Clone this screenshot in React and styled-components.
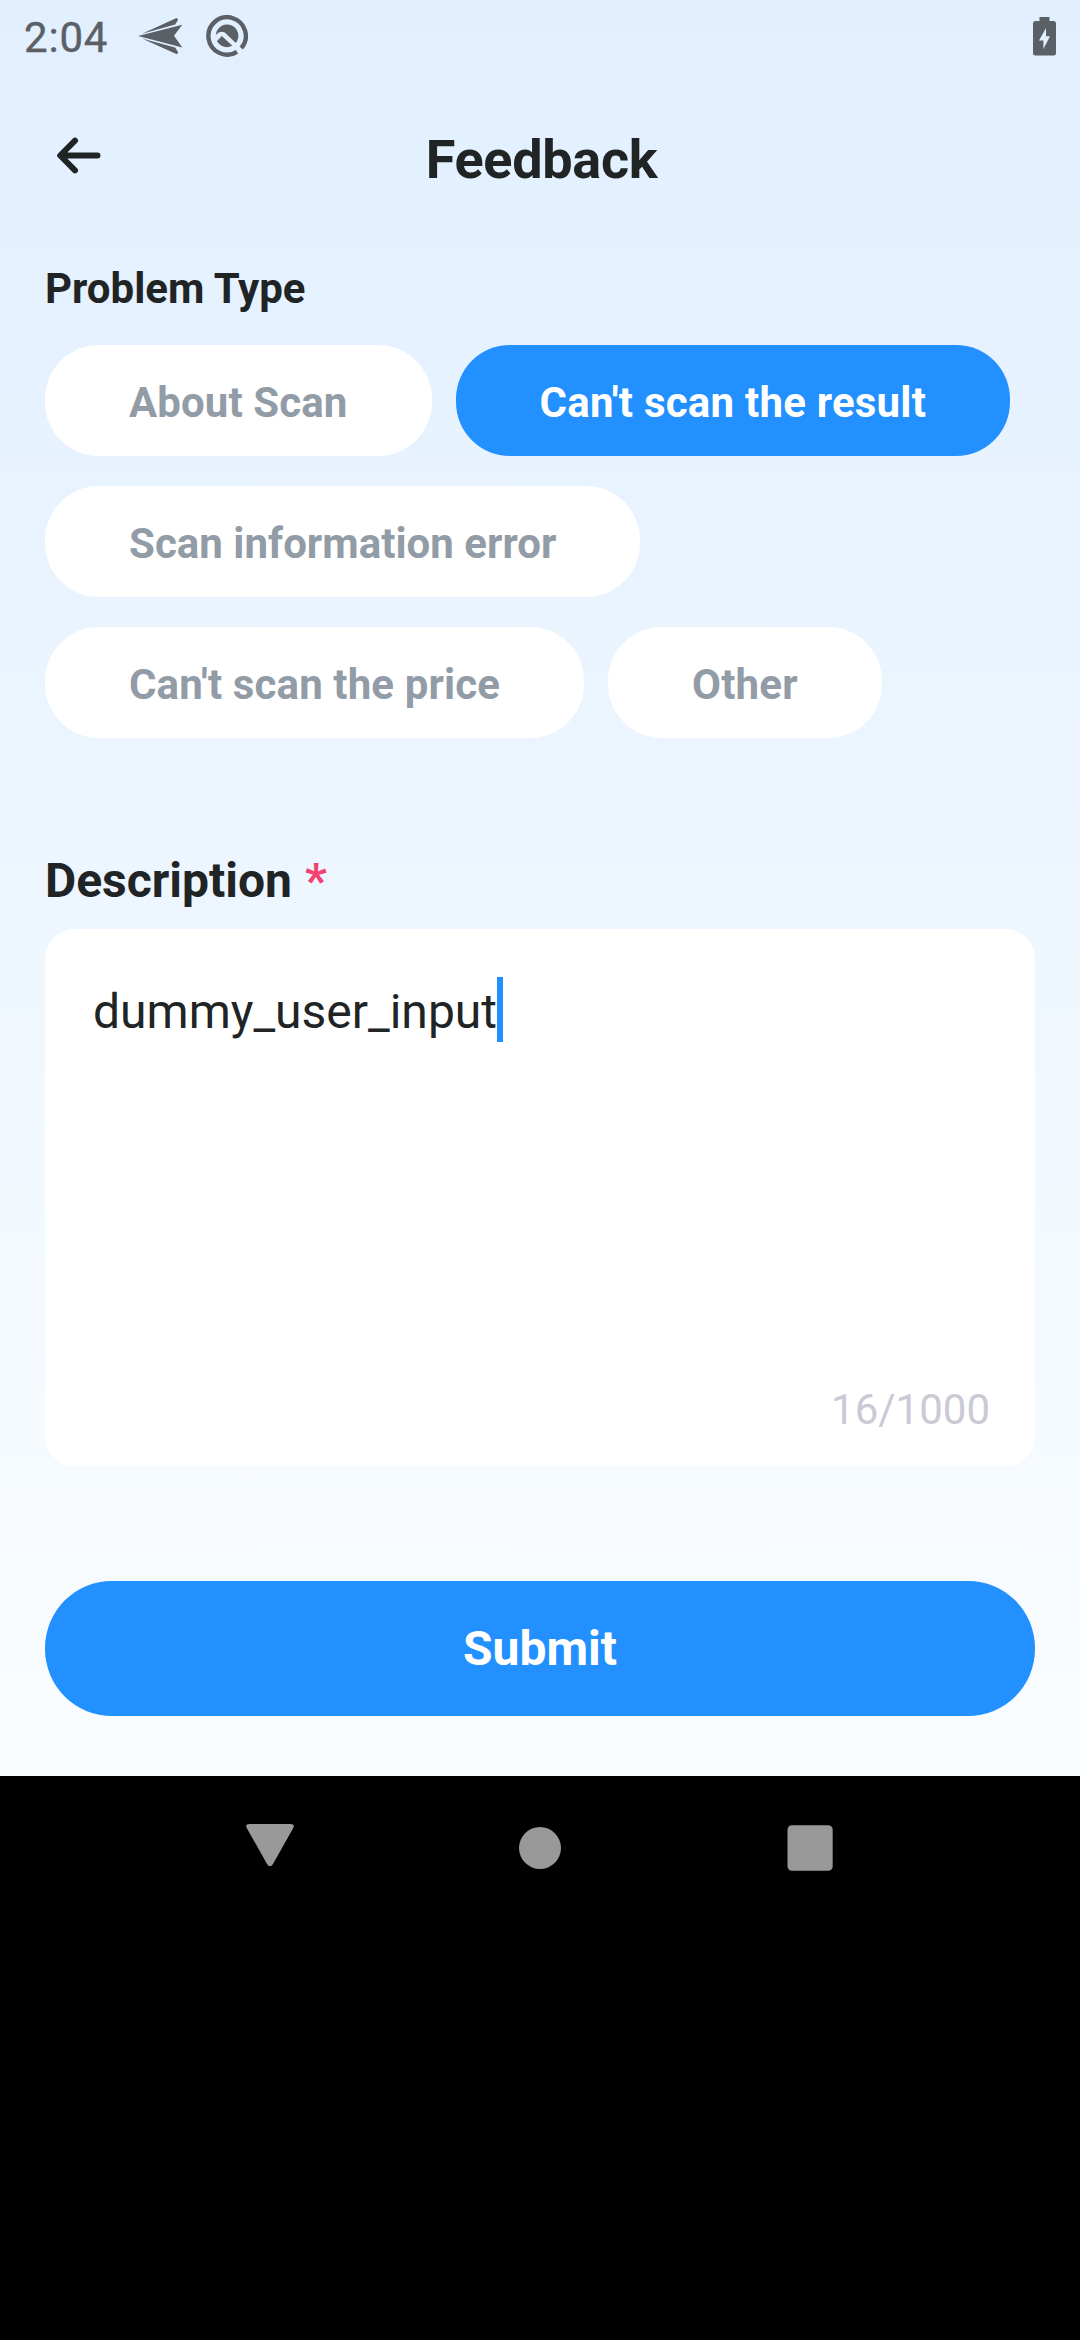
import React, { useState } from "react";
import styled, { createGlobalStyle } from "styled-components";

const GlobalStyle = createGlobalStyle`
  * { box-sizing: border-box; }
  body { margin: 0; background: #000; font-family: Roboto, "Noto Sans", sans-serif; }
  button { font-family: inherit; border: 0; margin: 0; }
`;

const Device = styled.div`
  width: 1080px;
  height: 2340px;
  display: flex;
  flex-direction: column;
  overflow: hidden;
  background: #000;
`;

const Screen = styled.main`
  height: 1776px;
  display: flex;
  flex-direction: column;
  background: linear-gradient(180deg, #e1efff 0%, #fafdff 100%);
  color: #212425;
`;

const StatusBar = styled.div`
  height: 72px;
  padding: 0 24px;
  display: flex;
  align-items: center;
  color: #5b6066;
`;

const Clock = styled.span`
  width: 114px;
  padding-top: 3px;
  font-size: 42px;
  line-height: 50px;
  font-weight: 400;
  letter-spacing: 0.8px;
  -webkit-text-stroke: 0.4px currentColor;
`;

const StatusIcons = styled.div`
  flex: 1;
  display: flex;
  align-items: center;
  gap: 22px;
`;

const Header = styled.header`
  height: 176px;
  padding: 0 45px;
  display: grid;
  grid-template-columns: 66px 1fr 66px;
  align-items: center;
`;

const BackButton = styled.button`
  width: 66px;
  height: 66px;
  padding: 0;
  margin-bottom: 10px;
  background: none;
  color: #212425;
  svg { display: block; }
`;

const Title = styled.h1`
  margin: 0;
  padding-left: 3px;
  font-size: 54px;
  line-height: 64px;
  font-weight: 700;
  letter-spacing: -0.3px;
  text-align: center;
`;

const Form = styled.div`
  padding: 16px 45px 0;
  display: flex;
  flex-direction: column;
`;

const SectionLabel = styled.h2`
  margin: 0;
  font-size: 42px;
  line-height: 50px;
  font-weight: 700;
`;

const ChipList = styled.div`
  margin-top: 31px;
  display: flex;
  flex-wrap: wrap;
  gap: 30px 24px;
`;

const Chip = styled.button`
  height: 111px;
  padding: 4px 84px 0;
  border-radius: 54px;
  font-size: 42px;
  line-height: 50px;
  font-weight: 700;
  letter-spacing: ${(p) => p.$tracking}px;
  white-space: nowrap;
  background: ${(p) => (p.$selected ? "#2290ff" : "#fff")};
  color: ${(p) => (p.$selected ? "#fff" : "#929ca6")};
`;

const FieldLabel = styled.h2`
  margin: 115px 0 20px;
  font-size: 48px;
  line-height: 56px;
  font-weight: 700;
`;

const Required = styled.span`
  margin-left: 1px;
  color: #f0436f;
`;

const DescriptionBox = styled.div`
  height: 537px;
  padding: 48px 45px 31px 48px;
  border-radius: 30px;
  background: #fff;
  display: flex;
  flex-direction: column;
  justify-content: space-between;
`;

const InputLine = styled.div`
  height: 65px;
  display: flex;
  align-items: center;
  font-size: 48px;
  line-height: 65px;
`;

const InputText = styled.span`
  padding-top: 4px;
`;

const Caret = styled.span`
  width: 6px;
  height: 65px;
  background: #2290ff;
`;

const Counter = styled.div`
  align-self: flex-end;
  font-size: 42px;
  line-height: 50px;
  color: #c9cad4;
`;

const SubmitButton = styled.button`
  margin-top: 115px;
  height: 135px;
  padding: 0;
  border-radius: 67px;
  background: #2290ff;
  color: #fff;
  font-size: 48px;
  font-weight: 700;
`;

const NavBar = styled.nav`
  height: 144px;
  padding: 0 135px;
  display: grid;
  grid-template-columns: repeat(3, 1fr);
  justify-items: center;
  align-items: center;
  svg { display: block; }
`;

const PlaneIcon = () => (
  <svg width="46" height="40" viewBox="0 0 46 40" fill="currentColor">
    <path d="M0 20 L44.3 8.8 L36 19.8 L44.3 31.4 Z" />
    <path d="M4 17.8 L38.5 2 L40.2 3.6 L37.2 8.4 Z" />
    <path d="M4 22.4 L37.2 31.5 L40.2 36.6 L38.8 38.2 Z" />
  </svg>
);

const CircleIcon = () => (
  <svg width="42" height="42" viewBox="0 0 42 42" fill="none">
    <path d="M35.3 33.1 A18.7 18.7 0 1 0 31 36.8" stroke="currentColor" strokeWidth="4.4" />
    <path d="M9.8 20 A11.3 11.3 0 1 1 29.8 28 L18.8 17.6 Q14.4 15 9.8 20 Z" fill="currentColor" />
    <path d="M10.8 26.2 L15.8 21 L26.4 30.8 Q17.5 35 10.8 26.2 Z" fill="currentColor" />
  </svg>
);

const BatteryIcon = () => (
  <svg width="23" height="39" viewBox="0 0 23 39">
    <path
      fill="currentColor"
      fillRule="evenodd"
      d="M6.5 0 H16.5 V4 H20.5 Q23 4 23 6.5 V36 Q23 38.5 20.5 38.5 H2.5 Q0 38.5 0 36 V6.5 Q0 4 2.5 4 H6.5 Z M13 11 L6 23.5 H10.4 V32 L17 19.3 H13 Z"
    />
  </svg>
);

const BackIcon = () => (
  <svg width="66" height="66" viewBox="0 0 66 66" fill="none" stroke="currentColor" strokeWidth="6" strokeLinecap="round" strokeLinejoin="round">
    <path d="M52.5 33.5 H15.5 M30 18.7 L15.2 33.5 L30 48.3" />
  </svg>
);

const NavBack = () => (
  <svg width="48" height="48" viewBox="0 0 48 48">
    <path fill="#999" d="M3.5 0 H44.5 Q49.5 0 47 4.4 L27 40 Q24 44.5 21 40 L1 4.4 Q-1.5 0 3.5 0 Z" />
  </svg>
);

const NavHome = () => (
  <svg width="48" height="48" viewBox="0 0 48 48">
    <circle cx="24" cy="24" r="21" fill="#999" />
  </svg>
);

const NavRecent = () => (
  <svg width="48" height="48" viewBox="0 0 48 48">
    <rect x="1.5" y="1.3" width="45.2" height="45.4" rx="4.5" fill="#999" />
  </svg>
);

const PROBLEM_TYPES = [
  { label: "About Scan", tracking: 0.1 },
  { label: "Can't scan the result", tracking: 0.22 },
  { label: "Scan information error", tracking: 0.03 },
  { label: "Can't scan the price", tracking: 0.12 },
  { label: "Other", tracking: 0.2 },
];

export default function App() {
  const [selected, setSelected] = useState("Can't scan the result");

  return (
    <>
      <GlobalStyle />
      <Device>
        <Screen>
          <StatusBar>
            <Clock>2:04</Clock>
            <StatusIcons>
              <PlaneIcon />
              <CircleIcon />
            </StatusIcons>
            <BatteryIcon />
          </StatusBar>
          <Header>
            <BackButton aria-label="Back">
              <BackIcon />
            </BackButton>
            <Title>Feedback</Title>
          </Header>
          <Form>
            <SectionLabel>Problem Type</SectionLabel>
            <ChipList>
              {PROBLEM_TYPES.map(({ label, tracking }) => (
                <Chip
                  key={label}
                  $selected={label === selected}
                  $tracking={tracking}
                  onClick={() => setSelected(label)}
                >
                  {label}
                </Chip>
              ))}
            </ChipList>
            <FieldLabel>
              Description <Required>*</Required>
            </FieldLabel>
            <DescriptionBox>
              <InputLine>
                <InputText>dummy_user_input</InputText>
                <Caret />
              </InputLine>
              <Counter>16/1000</Counter>
            </DescriptionBox>
            <SubmitButton>Submit</SubmitButton>
          </Form>
        </Screen>
        <NavBar>
          <NavBack />
          <NavHome />
          <NavRecent />
        </NavBar>
      </Device>
    </>
  );
}
